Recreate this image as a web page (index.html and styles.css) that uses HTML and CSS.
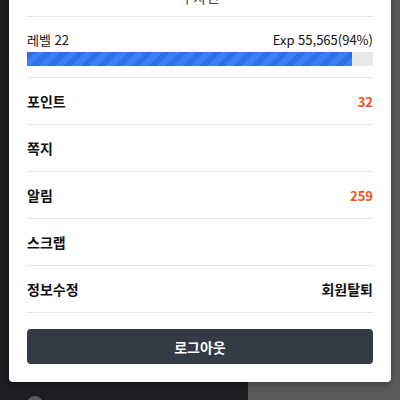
FILE: index.html
```html
<!DOCTYPE html>
<html lang="ko">

<head>
    <meta charset="UTF-8">
    <meta name="viewport" content="width=device-width, initial-scale=1.0">
    <title>내 정보</title>
    <link rel="stylesheet" href="styles.css">
</head>

<body>
    <div class="page">
        <div class="side">
            <div class="avatar"></div>
        </div>
        <div class="main"></div>
    </div>

    <div class="modal">
        <div class="name">부자련</div>

        <div class="level">
            <div class="level-top">
                <span>레벨 22</span>
                <span>Exp 55,565(94%)</span>
            </div>
            <div class="bar">
                <div class="bar-fill" style="width: 94%;"></div>
            </div>
        </div>

        <div class="row">
            <span>포인트</span>
            <span class="count">32</span>
        </div>
        <div class="row">
            <span>쪽지</span>
        </div>
        <div class="row">
            <span>알림</span>
            <span class="count">259</span>
        </div>
        <div class="row">
            <span>스크랩</span>
        </div>
        <div class="row">
            <span>정보수정</span>
            <span class="leave">회원탈퇴</span>
        </div>

        <button class="logout" type="button">로그아웃</button>
    </div>
</body>

</html>
```

FILE: styles.css
```css
/* base */
body {
    margin: 0;
    height: 400px;
    overflow: hidden;
    font-family: "Noto Sans CJK KR", "Noto Sans", sans-serif;
    color: #111;
}

/* dimmed page behind the modal */
.page {
    display: grid;
    grid-template-columns: 248px 1fr;
    height: 400px;
}

.side {
    background: #1d1e21;
    display: flex;
    align-items: flex-end;
    padding-left: 27px;
}

.avatar {
    width: 16px;
    height: 16px;
    border-radius: 50%;
    background: #5a5b5e;
    margin-bottom: -12px;
}

.main {
    background: #5a5a5a;
}

/* modal */
.modal {
    position: absolute;
    left: 9px;
    right: 9px;
    bottom: 18px;
    background: #fff;
    border-radius: 4px;
    box-shadow: 0 2px 6px rgba(0, 0, 0, 0.35);
    padding: 0 18px 18px;
}

.name {
    text-align: center;
    font-size: 14px;
    color: #444;
    line-height: 20px;
    padding-bottom: 9px;
    border-bottom: 1px solid #e5e5e5;
}

.level {
    padding: 14px 0 11px;
    border-bottom: 1px solid #e5e5e5;
}

.level-top {
    display: flex;
    justify-content: space-between;
    font-size: 13px;
    line-height: 18px;
    margin-bottom: 3px;
}

.bar {
    height: 14px;
    background: #e6e8ec;
}

.bar-fill {
    height: 100%;
    background: repeating-linear-gradient(-45deg,
            #3a7ff5 0 6px,
            #2f6fe8 6px 12px);
}

.row {
    display: flex;
    justify-content: space-between;
    align-items: center;
    height: 46px;
    border-bottom: 1px solid #e5e5e5;
    font-size: 14px;
    font-weight: bold;
}

.count {
    color: #f4511e;
    font-size: 13px;
}

.leave {
    font-size: 14px;
}

.logout {
    display: block;
    width: 100%;
    height: 35px;
    margin-top: 16px;
    border: none;
    border-radius: 4px;
    background: #343a46;
    color: #fff;
    font-family: inherit;
    font-size: 14px;
    font-weight: bold;
}
```
